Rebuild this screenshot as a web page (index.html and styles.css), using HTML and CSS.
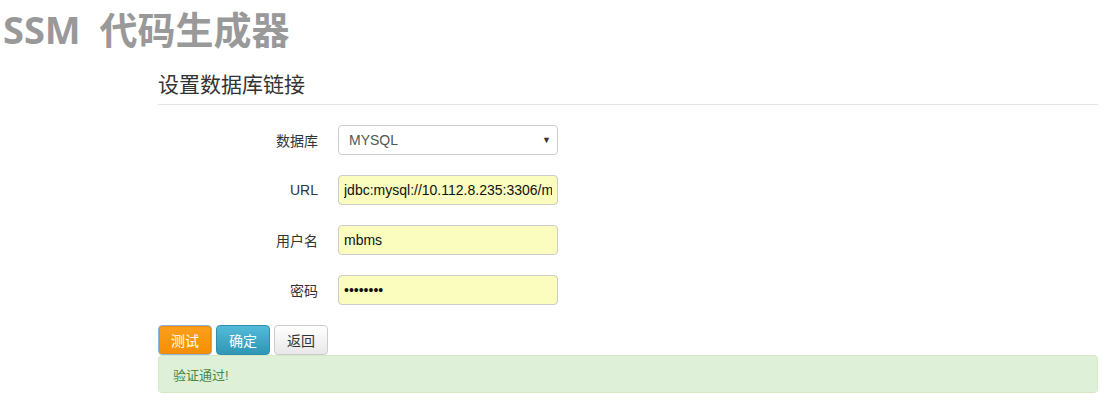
FILE: index.html
```html
<!DOCTYPE html>
<html lang="zh">
<head>
<meta charset="utf-8">
<title>SSM 代码生成器</title>
<link rel="stylesheet" href="styles.css">
</head>
<body>
<h1 class="title">SSM 代码生成器</h1>
<div class="panel">
  <h3 class="panel-heading">设置数据库链接</h3>
  <form class="form">
    <div class="row">
      <label class="label">数据库</label>
      <div class="select">
        <span class="select-value">MYSQL</span>
        <span class="caret">▼</span>
      </div>
    </div>
    <div class="row">
      <label class="label" for="url">URL</label>
      <input class="input autofill" id="url" type="text" value="jdbc:mysql://10.112.8.235:3306/mbms">
    </div>
    <div class="row">
      <label class="label" for="user">用户名</label>
      <input class="input autofill" id="user" type="text" value="mbms">
    </div>
    <div class="row">
      <label class="label" for="pwd">密码</label>
      <input class="input autofill" id="pwd" type="password" value="mbms1234">
    </div>
  </form>
  <div class="actions">
    <button class="btn btn-warning" type="button">测试</button>
    <button class="btn btn-info" type="button">确定</button>
    <button class="btn btn-default" type="button">返回</button>
  </div>
  <div class="alert">验证通过!</div>
</div>
</body>
</html>
```
FILE: styles.css
```css
* { box-sizing: border-box; }
body {
  margin: 0;
  font-family: "Liberation Sans", Arial, "Noto Sans CJK SC", sans-serif;
  color: #333;
  background: #fff;
}
.title {
  margin: 0;
  padding: 7px 0 3px 3px;
  font-family: "Open Sans", "Noto Sans CJK SC", sans-serif;
  font-size: 38px;
  line-height: 44px;
  font-weight: bold;
  word-spacing: 9px;
  color: #999;
}
.panel {
  margin-left: 158px;
  width: 940px;
}
.panel-heading {
  margin: 16px 0 0;
  font-size: 21px;
  font-weight: normal;
  line-height: 30px;
  padding-bottom: 4px;
  border-bottom: 1px solid #e5e5e5;
  color: #333;
}
.form {
  display: flex;
  flex-direction: column;
  gap: 20px;
  padding-top: 20px;
}
.row {
  display: flex;
  align-items: center;
  gap: 20px;
}
.label {
  width: 160px;
  text-align: right;
  font-size: 14px;
  color: #333;
}
.select, .input {
  width: 220px;
  height: 30px;
  border: 1px solid #ccc;
  border-radius: 4px;
  font-size: 14px;
  margin: 0;
}
.select {
  display: flex;
  align-items: center;
  justify-content: space-between;
  background: #fff;
  padding: 0 6px 0 10px;
  color: #555;
}
.caret {
  font-size: 9px;
  color: #333;
}
.input {
  padding: 0 5px;
  font-family: "Liberation Sans", Arial, sans-serif;
  color: #111;
  outline: none;
}
.autofill {
  background: #fafdbd;
}
.actions {
  display: flex;
  gap: 4px;
  padding-top: 20px;
}
.btn {
  height: 30px;
  margin: 0;
  padding: 0 12px;
  font-family: inherit;
  font-size: 14px;
  border-radius: 4px;
  border: 1px solid #ccc;
  cursor: pointer;
}
.btn-warning {
  color: #fff;
  background: linear-gradient(#fb9f1c, #f58f04);
  border-color: #8fb3e0;
  box-shadow: inset 0 0 0 1px #e98c10;
}
.btn-info {
  color: #fff;
  background: linear-gradient(#54bad9, #2f96b4);
  border-color: #2e8fac;
}
.btn-default {
  color: #333;
  background: linear-gradient(#fff, #e8e8e8);
  border-color: #ccc;
}
.alert {
  height: 38px;
  padding: 0 14px;
  display: flex;
  align-items: center;
  font-size: 13px;
  color: #468847;
  background: #dff0d8;
  border: 1px solid #d6e9c6;
  border-radius: 4px;
}
```
